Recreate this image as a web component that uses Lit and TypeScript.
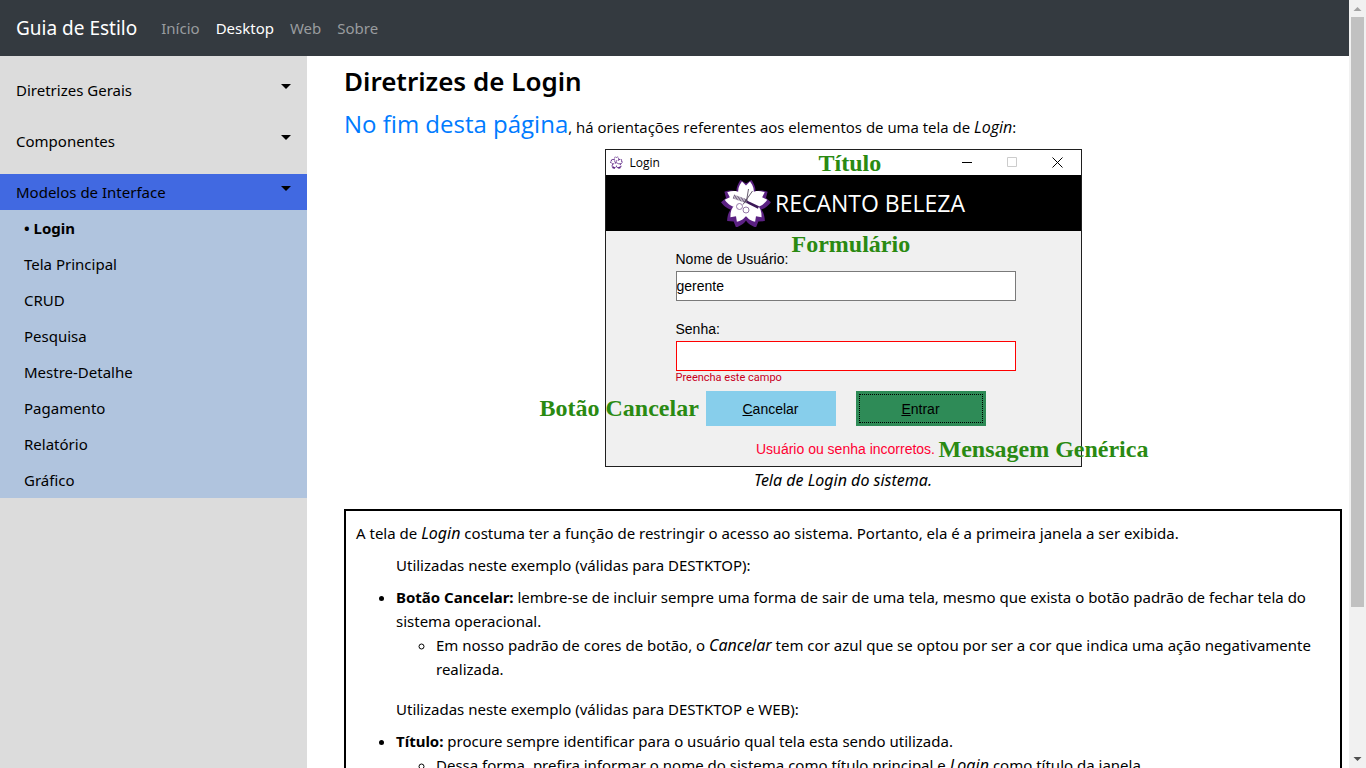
import { LitElement, html, css, svg } from "lit";
import { customElement, state } from "lit/decorators.js";
import { classMap } from "lit/directives/class-map.js";

const petals = [0, 72, 144, 216, 288];

@customElement("sakura-mark")
class SakuraMark extends LitElement {
  static styles = css`
    :host { display: block; }
    svg { display: block; width: 100%; height: 100%; }
  `;
  render() {
    return html`
      <svg viewBox="0 0 50 48" aria-hidden="true">
        <g fill="#5b2182">
          ${petals.map((a) => svg`<path transform="rotate(${a} 25 25.500)"
            d="M25 26L17 17C14 12 16 6 19.500 1L25 4.500L30.500 1C34 6 36 12 33 17Z"/>`)}
        </g>
        <g fill="#ffffff">
          ${petals.map((a) => svg`<path transform="rotate(${a} 25 23.500)"
            d="M25 25L17.500 15.500C16.500 11 17.500 7 21 2.500L25 6.500L29 2.500C32.500 7 33.500 11 32.500 15.500Z"/>`)}
          <circle cx="25" cy="23.500" r="9"/>
        </g>
        <g fill="none" stroke="#3c1857">
          <path d="M24 21.500L28 24L37.500 28.500" stroke-width="2.500"/>
          <path d="M12.500 17.500L26 22.500" stroke="#6d5a7c" stroke-width="4" stroke-dasharray="1 0.500"/>
          <path d="M27.500 10L25.500 22M31.500 12L22 25.500" stroke="#55485e" stroke-width="0.900"/>
          <circle cx="18.500" cy="27.500" r="3" stroke="#8a6a9c" stroke-width="0.900"/>
          <circle cx="25" cy="31" r="3" stroke="#8a6a9c" stroke-width="0.900"/>
        </g>
      </svg>
    `;
  }
}

@customElement("sakura-outline")
class SakuraOutline extends LitElement {
  static styles = css`
    :host { display: block; }
    svg { display: block; width: 100%; height: 100%; }
  `;
  render() {
    return html`
      <svg viewBox="0 0 13 13" aria-hidden="true" fill="none" stroke="#5b2182">
        ${petals.map((a) => svg`<path transform="rotate(${a} 6.500 6.800)" stroke-width="0.900" stroke-dasharray="2 0.700"
          d="M4.700 4.500C3.900 3 4.500 1.500 5.500 0.800L6.500 1.800L7.500 0.800C8.500 1.500 9.100 3 8.300 4.500"/>`)}
        <path stroke-width="0.700" d="M4 5.500L9 8M7 4L5 8"/>
        <path stroke-width="1.500" d="M2.500 11.500L4.800 11.800M8.200 11.800L10.500 11.500"/>
      </svg>
    `;
  }
}

@customElement("login-window")
class LoginWindow extends LitElement {
  static styles = css`
    :host { display: block; }
    * { box-sizing: border-box; }
    .window {
      position: relative;
      width: 477px;
      border: 1px solid #1f1f1f;
      background: #f0f0f0;
      font-family: "Liberation Sans", Arial, sans-serif;
      font-size: 14px;
      line-height: 18px;
      color: #000;
    }
    .titlebar { display: flex; align-items: center; height: 25px; padding: 0 1px 0 4px; background: #fff; }
    .icon { width: 13px; height: 13px; margin-right: 7px; }
    .caption { flex: 1; font: 12px/16px "Open Sans", sans-serif; }
    .control {
      display: grid; place-items: center; width: 45px; height: 25px;
      padding: 0; border: 0; background: none; color: #000;
    }
    .control:disabled { color: #ccc; }
    .banner {
      display: flex; align-items: center; justify-content: center; gap: 4px;
      height: 56px; background: #000; color: #fff;
      font: 23px/32px "Open Sans", sans-serif;
    }
    .logo { width: 50px; height: 48px; }
    .form { padding: 19px 65px 8px 70px; }
    .label { display: block; margin-bottom: 3px; }
    .field {
      display: block; width: 100%; height: 30px; padding: 0; margin: 0;
      border: 1px solid #7a7a7a; border-radius: 0; background: #fff; color: #000;
      font: inherit; outline: 0;
    }
    .user { margin-bottom: 19px; }
    .invalid { border-color: #f00; }
    .hint { margin: 0 0 6px; font: 11px/14px Roboto, sans-serif; color: #c8001e; }
    .actions { display: flex; justify-content: center; gap: 20px; margin-bottom: 14px; }
    .action {
      width: 130px; height: 35px; padding: 0; border: 0; color: #000; font: inherit;
    }
    .cancel { background: #87ceeb; }
    .enter { background: #2e8b57; outline: 1px dotted #000; outline-offset: -4px; }
    .message { margin: 0; text-align: center; color: #ff0033; }
    .note {
      position: absolute; white-space: nowrap; color: #2a8a12;
      font: bold 24px/24px "Liberation Serif", serif;
    }
    .note-title { left: 213px; top: 1px; }
    .note-form { left: 186px; top: 82px; }
    .note-cancel { left: -66px; top: 246px; }
    .note-message { left: 333px; top: 287px; }
  `;
  render() {
    return html`
      <div class="window">
        <div class="titlebar">
          <sakura-outline class="icon"></sakura-outline>
          <span class="caption">Login</span>
          <button class="control" type="button" aria-label="Minimizar">
            <svg width="11" height="11" stroke="currentColor"><path d="M0 5.500H10"/></svg>
          </button>
          <button class="control" type="button" aria-label="Maximizar" disabled>
            <svg width="11" height="11" fill="none" stroke="currentColor"><path d="M0.500 0.500H9.500V9.500H0.500Z"/></svg>
          </button>
          <button class="control" type="button" aria-label="Fechar">
            <svg width="11" height="11" stroke="currentColor"><path d="M0.500 0.500L10.500 10.500M10.500 0.500L0.500 10.500"/></svg>
          </button>
        </div>
        <div class="banner"><sakura-mark class="logo"></sakura-mark><span>RECANTO BELEZA</span></div>
        <form class="form" @submit=${(e: Event) => e.preventDefault()}>
          <label class="label" for="user">Nome de Usuário:</label>
          <input class="field user" id="user" type="text" value="gerente" />
          <label class="label" for="password">Senha:</label>
          <input class="field invalid" id="password" type="password" aria-describedby="hint" />
          <p class="hint" id="hint">Preencha este campo</p>
          <div class="actions">
            <button class="action cancel" type="button"><u>C</u>ancelar</button>
            <button class="action enter" type="submit"><u>E</u>ntrar</button>
          </div>
          <p class="message">Usuário ou senha incorretos.</p>
        </form>
        <span class="note note-title">Título</span>
        <span class="note note-form">Formulário</span>
        <span class="note note-cancel">Botão Cancelar</span>
        <span class="note note-message">Mensagem Genérica</span>
      </div>
    `;
  }
}

@customElement("app-root")
class AppRoot extends LitElement {
  @state() private current = "Login";

  private pages = ["Login", "Tela Principal", "CRUD", "Pesquisa", "Mestre-Detalhe", "Pagamento", "Relatório", "Gráfico"];
  private groups = ["Diretrizes Gerais", "Componentes", "Modelos de Interface"];
  private sections = ["Início", "Desktop", "Web", "Sobre"];

  static styles = css`
    :host {
      display: grid;
      grid-template-columns: minmax(0, 1fr) 17px;
      height: 100vh;
      overflow: hidden;
      background: #fff;
      color: #000;
      font: 15px/24px "Noto Sans", "Open Sans", sans-serif;
    }
    * { box-sizing: border-box; }
    a { text-decoration: none; }
    i { font-size: 16px; line-height: 20px; }
    .page { display: flex; flex-direction: column; min-height: 0; overflow: hidden; }
    .navbar { display: flex; align-items: center; flex: none; height: 56px; padding: 0 16px; background: #343a40; }
    .brand { margin-right: 24px; font-size: 19px; line-height: 30px; color: #fff; }
    .links { display: flex; gap: 16px; }
    .nav-link { color: #999c9f; }
    .nav-link.active { color: #fff; }
    .layout { display: flex; flex: 1; min-height: 0; }
    .sidebar { display: flex; flex-direction: column; gap: 15px; flex: none; width: 307px; padding-top: 16px; background: #dcdcdc; }
    .group {
      display: flex; justify-content: space-between; width: 100%; height: 36px; padding: 6px 16px;
      border: 0; background: none; color: #000; font: inherit; text-align: left;
    }
    .group.open { background: #4169e1; }
    .caret { margin-top: 6px; border: 5px solid transparent; border-top-color: #000; border-bottom: 0; height: 5px; }
    .submenu { margin: 0; padding: 0; list-style: none; background: #b0c4de; }
    .sub-link { display: block; padding: 6px 24px; color: #000; }
    .sub-link.active { font-weight: 700; }
    .content { flex: 1; min-width: 0; padding: 8px 7px 0 37px; }
    .heading { margin: 0 0 8px; font-size: 26px; line-height: 34px; font-weight: 600; }
    .intro { margin: 0 0 4px; line-height: 36px; font-family: "Open Sans", sans-serif; }
    .jump { font-size: 24px; color: #007bff; }
    .figure { display: flex; flex-direction: column; align-items: center; margin: 0 0 16px; }
    .figcaption { font-size: 16px; font-style: italic; line-height: 26px; }
    .box { border: 2px solid #000; padding: 10px; }
    .text { margin: 0 0 8px; }
    .rules { padding-left: 40px; }
    .list { margin: 0 0 16px; padding: 0; }
    .sublist { margin: 0; padding-left: 40px; }
    .scrollbar { display: flex; flex-direction: column; align-items: center; background: #f1f1f1; padding: 0 2px; }
    .arrow { flex: none; width: 13px; height: 17px; }
    .track { flex: 1; width: 13px; }
    .thumb { height: 590px; background: #c1c1c1; }
  `;

  private open(e: Event, page: string) {
    e.preventDefault();
    this.current = page;
  }

  render() {
    return html`
      <div class="page">
        <header class="navbar">
          <a class="brand" href="#">Guia de Estilo</a>
          <nav class="links">
            ${this.sections.map((s) => html`<a class=${classMap({ "nav-link": true, active: s === "Desktop" })} href="#">${s}</a>`)}
          </nav>
        </header>
        <div class="layout">
          <aside class="sidebar">
            ${this.groups.slice(0, 2).map((g) => html`<button class="group" type="button">${g}<span class="caret"></span></button>`)}
            <div>
              <button class="group open" type="button" aria-expanded="true">${this.groups[2]}<span class="caret"></span></button>
              <ul class="submenu">
                ${this.pages.map((p) => html`<li>
                  <a class=${classMap({ "sub-link": true, active: p === this.current })} href="#"
                    @click=${(e: Event) => this.open(e, p)}>${p === this.current ? "• " : ""}${p}</a>
                </li>`)}
              </ul>
            </div>
          </aside>
          <main class="content">
            <h1 class="heading">Diretrizes de Login</h1>
            <p class="intro"><a class="jump" href="#end">No fim desta página</a>, há orientações referentes aos elementos de uma tela de <i>Login</i>:</p>
            <figure class="figure">
              <login-window></login-window>
              <figcaption class="figcaption">Tela de Login do sistema.</figcaption>
            </figure>
            <section class="box">
              <p class="text">A tela de <i>Login</i> costuma ter a função de restringir o acesso ao sistema. Portanto, ela é a primeira janela a ser exibida.</p>
              <div class="rules">
                <p class="text">Utilizadas neste exemplo (válidas para DESTKTOP):</p>
                <ul class="list">
                  <li><b>Botão Cancelar:</b> lembre-se de incluir sempre uma forma de sair de uma tela, mesmo que exista o botão padrão de fechar tela do sistema operacional.
                    <ul class="sublist">
                      <li>Em nosso padrão de cores de botão, o <i>Cancelar</i> tem cor azul que se optou por ser a cor que indica uma ação negativamente realizada.</li>
                    </ul>
                  </li>
                </ul>
                <p class="text">Utilizadas neste exemplo (válidas para DESTKTOP e WEB):</p>
                <ul class="list">
                  <li><b>Título:</b> procure sempre identificar para o usuário qual tela esta sendo utilizada.
                    <ul class="sublist">
                      <li>Dessa forma, prefira informar o nome do sistema como título principal e <i>Login</i> como título da janela.</li>
                    </ul>
                  </li>
                </ul>
              </div>
            </section>
          </main>
        </div>
      </div>
      <div class="scrollbar" aria-hidden="true">
        <svg class="arrow" viewBox="0 0 13 17"><path fill="#a3a3a3" d="M6.500 7L10.500 11H2.500Z"/></svg>
        <div class="track"><div class="thumb"></div></div>
        <svg class="arrow" viewBox="0 0 13 17"><path fill="#505050" d="M6.500 10L10.500 6H2.500Z"/></svg>
      </div>
    `;
  }
}
